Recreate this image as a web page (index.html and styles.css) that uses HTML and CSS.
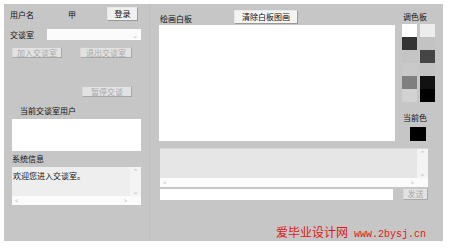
FILE: index.html
```html
<!DOCTYPE html>
<html>
<head>
  <title>交谈室</title>
  <link rel="stylesheet" href="styles.css">
</head>
<body>
  <div class="window">
    <div class="left">
      <div class="row-login">
        <span class="lbl-user">用户名</span>
        <span class="lbl-name">甲</span>
        <span class="btn btn-login">登录</span>
      </div>
      <div class="row-room">
        <span class="lbl-room">交谈室</span>
        <span class="select"><span class="caret">&#8964;</span></span>
      </div>
      <div class="row-join">
        <span class="btn off btn-join">加入交谈室</span>
        <span class="btn off btn-quit">退出交谈室</span>
      </div>
      <div class="row-pause">
        <span class="btn off btn-pause">暂停交谈</span>
      </div>
      <div class="lbl-users">当前交谈室用户</div>
      <div class="users-box"></div>
      <div class="lbl-info">系统信息</div>
      <div class="info-box">
        <div class="info-text">欢迎您进入交谈室。</div>
        <div class="vscroll"><span>&#8963;</span><span>&#8964;</span></div>
        <div class="hscroll"><span>&lt;</span><span>&gt;</span></div>
      </div>
    </div>

    <div class="main">
      <div class="top">
        <div class="board-col">
          <div class="board-head">
            <span class="lbl-board">绘画白板</span>
            <span class="btn btn-clear">清除白板图画</span>
          </div>
          <div class="board"></div>
        </div>
        <div class="palette-col">
          <div class="lbl-palette">调色板</div>
          <div class="swatches">
            <span class="sw" style="background:#ffffff"></span>
            <span class="sw" style="background:#ededed"></span>
            <span class="sw" style="background:#333333"></span>
            <span class="sw" style="background:#c3c3c3"></span>
            <span class="sw" style="background:#c4c4c4"></span>
            <span class="sw" style="background:#454545"></span>
            <span class="sw" style="background:#c9c9c9"></span>
            <span class="sw" style="background:#c3c3c3"></span>
            <span class="sw" style="background:#7f7f7f"></span>
            <span class="sw" style="background:#121212"></span>
            <span class="sw" style="background:#d2d2d2"></span>
            <span class="sw" style="background:#000000"></span>
          </div>
          <div class="lbl-current">当前色</div>
          <div class="current"></div>
        </div>
      </div>
      <div class="chat-box">
        <div class="vscroll"><span>&#8963;</span><span>&#8964;</span></div>
        <div class="hscroll"><span>&lt;</span><span>&gt;</span></div>
      </div>
      <div class="row-send">
        <span class="msg-input"></span>
        <span class="btn off btn-send">发送</span>
      </div>
      <div class="mark">
        <span class="mark-cn">爱毕业设计网</span>
        <span class="mark-url">www.2bysj.cn</span>
      </div>
    </div>
  </div>
</body>
</html>
```

FILE: styles.css
```css
body {
  margin: 0;
  padding: 0;
  background: #ffffff;
  font-family: "Noto Sans CJK SC", "DejaVu Sans", sans-serif;
  font-size: 8px;
  color: #111;
}

.window {
  display: flex;
  margin: 4px 0 0 4px;
  width: 439px;
  height: 237px;
  background: #c6c6c6;
}

.left {
  box-sizing: border-box;
  width: 146px;
  padding: 3px 0 0 6px;
  border-right: 1px solid #bfbfbf;
}

.btn {
  display: flex;
  align-items: center;
  justify-content: center;
  box-sizing: border-box;
  background: #f0f0f0;
  border: 1px solid #9a9a9a;
  border-top-color: #e8e8e8;
  border-left-color: #e8e8e8;
  line-height: 1;
  white-space: nowrap;
}

.btn.off {
  color: #a8a8a8;
  background: #e2e2e2;
  border-color: #c8c8c8 #a8a8a8 #a8a8a8 #d8d8d8;
}

.row-login {
  display: flex;
  align-items: center;
  height: 14px;
}

.lbl-user {
  width: 58px;
}

.lbl-name {
  width: 39px;
}

.btn-login {
  width: 31px;
  height: 14px;
}

.row-room {
  display: flex;
  align-items: center;
  margin-top: 8px;
  height: 11px;
}

.lbl-room {
  width: 37px;
}

.select {
  display: flex;
  justify-content: flex-end;
  align-items: center;
  box-sizing: border-box;
  width: 94px;
  height: 11px;
  background: #fbfbfb;
  color: #c0c0c0;
  font-size: 7px;
  padding-right: 3px;
}

.row-join {
  display: flex;
  gap: 18px;
  margin-top: 7px;
  padding-left: 2px;
  height: 11px;
}

.btn-join {
  width: 50px;
  height: 11px;
}

.btn-quit {
  width: 52px;
  height: 11px;
}

.row-pause {
  display: flex;
  margin-top: 28px;
  padding-left: 72px;
  height: 11px;
}

.btn-pause {
  width: 50px;
  height: 11px;
}

.lbl-users {
  margin-top: 8px;
  padding-left: 10px;
  height: 12px;
  line-height: 12px;
}

.users-box {
  margin: 2px 0 0 2px;
  width: 129px;
  height: 32px;
  background: #ffffff;
}

.lbl-info {
  margin-top: 2px;
  padding-left: 2px;
  height: 12px;
  line-height: 12px;
}

.info-box {
  position: relative;
  margin: 2px 0 0 2px;
  width: 129px;
  height: 38px;
  background: #eeeeee;
}

.info-text {
  padding: 3px 0 0 1px;
  font-size: 8px;
}

.vscroll {
  position: absolute;
  top: 0;
  right: 0;
  bottom: 9px;
  width: 11px;
  display: flex;
  flex-direction: column;
  justify-content: space-between;
  align-items: center;
  background: #f4f4f4;
  color: #b8b8b8;
  font-size: 7px;
  line-height: 9px;
}

.hscroll {
  position: absolute;
  left: 0;
  right: 0;
  bottom: 0;
  height: 9px;
  display: flex;
  justify-content: space-between;
  align-items: center;
  padding: 0 14px 0 3px;
  background: #fbfbfb;
  color: #b8b8b8;
  font-size: 6px;
}

.main {
  flex: 1;
  box-sizing: border-box;
  padding: 6px 8px 0 9px;
}

.top {
  display: flex;
  align-items: flex-start;
}

.board-col {
  width: 236px;
}

.board-head {
  display: flex;
  align-items: flex-start;
  height: 15px;
}

.lbl-board {
  width: 74px;
  padding: 3px 0 0 1px;
  line-height: 12px;
}

.btn-clear {
  width: 64px;
  height: 14px;
  background: #f4f4f4;
}

.board {
  height: 116px;
  background: #ffffff;
}

.palette-col {
  margin-left: 7px;
}

.lbl-palette {
  height: 14px;
  padding-left: 1px;
  line-height: 14px;
}

.swatches {
  display: grid;
  grid-template-columns: 15px 15px;
  grid-auto-rows: 13px;
  column-gap: 3px;
}

.lbl-current {
  margin-top: 9px;
  padding-left: 1px;
  height: 14px;
  line-height: 14px;
}

.current {
  margin: 2px 0 0 8px;
  width: 16px;
  height: 14px;
  background: #000000;
}

.chat-box {
  position: relative;
  margin: 7px 0 0 1px;
  width: 268px;
  height: 39px;
  background: #e6e6e6;
  border-top: 1px solid #d6d6d6;
  box-sizing: border-box;
}

.row-send {
  display: flex;
  align-items: center;
  margin: 1px 0 0 1px;
  height: 12px;
}

.msg-input {
  width: 233px;
  height: 11px;
  background: #ffffff;
}

.btn-send {
  margin-left: 10px;
  width: 25px;
  height: 12px;
}

.mark {
  display: flex;
  align-items: baseline;
  gap: 6px;
  margin: 25px 0 0 117px;
  color: #e01818;
  line-height: 13px;
}

.mark-cn {
  font-size: 12px;
}

.mark-url {
  font-family: "Liberation Mono", "DejaVu Sans Mono", monospace;
  font-size: 10px;
}
```
